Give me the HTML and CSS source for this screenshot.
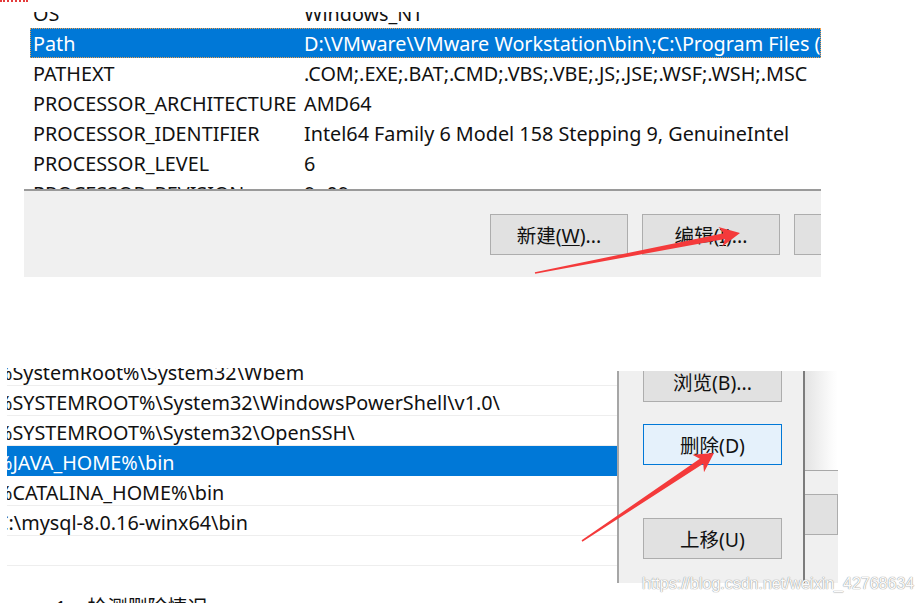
FILE: index.html
```html
<!DOCTYPE html>
<html lang="zh-CN">
<head>
<meta charset="utf-8">
<title>环境变量 Path 编辑</title>
<link rel="stylesheet" href="styles.css">
</head>
<body>
<div class="mark-dash"></div>

<section class="shot-vars">
  <div class="var-list">
    <div class="var-rows">
      <div class="var-row"><span class="var-name">OS</span><span class="var-value">Windows_NT</span></div>
      <div class="var-row is-selected"><span class="var-name">Path</span><span class="var-value">D:\VMware\VMware Workstation\bin\;C:\Program Files (x86)\Common Files\Oracle\Java\javapath</span></div>
      <div class="var-row"><span class="var-name">PATHEXT</span><span class="var-value">.COM;.EXE;.BAT;.CMD;.VBS;.VBE;.JS;.JSE;.WSF;.WSH;.MSC</span></div>
      <div class="var-row"><span class="var-name">PROCESSOR_ARCHITECTURE</span><span class="var-value">AMD64</span></div>
      <div class="var-row"><span class="var-name">PROCESSOR_IDENTIFIER</span><span class="var-value">Intel64 Family 6 Model 158 Stepping 9, GenuineIntel</span></div>
      <div class="var-row"><span class="var-name">PROCESSOR_LEVEL</span><span class="var-value">6</span></div>
      <div class="var-row"><span class="var-name">PROCESSOR_REVISION</span><span class="var-value">9e09</span></div>
    </div>
  </div>
  <div class="var-buttons">
    <button class="btn">新建(<u>W</u>)...</button>
    <button class="btn">编辑(<u>I</u>)...</button>
    <button class="btn">删除(<u>L</u>)</button>
  </div>
</section>

<section class="shot-path">
  <div class="path-list">
    <div class="path-rows">
      <div class="path-row"><span>%SystemRoot%\System32\Wbem</span></div>
      <div class="path-row"><span>%SYSTEMROOT%\System32\WindowsPowerShell\v1.0\</span></div>
      <div class="path-row"><span>%SYSTEMROOT%\System32\OpenSSH\</span></div>
      <div class="path-row is-selected"><span>%JAVA_HOME%\bin</span></div>
      <div class="path-row"><span>%CATALINA_HOME%\bin</span></div>
      <div class="path-row"><span>C:\mysql-8.0.16-winx64\bin</span></div>
      <div class="path-row"><span></span></div>
    </div>
  </div>
  <div class="path-actions">
    <button class="btn btn-first">浏览(B)...</button>
    <button class="btn btn-hover">删除(D)</button>
    <button class="btn btn-up">上移(U)</button>
  </div>
  <div class="path-behind">
    <div class="behind-shade"></div>
    <div class="behind-panel"><div class="behind-btn"></div></div>
  </div>
</section>

<p class="step">1.&nbsp;&nbsp;&nbsp;检测删除情况</p>

<div class="watermark">https://blog.csdn.net/weixin_42768634</div>

<svg class="arrows" width="922" height="603" viewBox="0 0 922 603" aria-hidden="true">
  <polygon points="534.8,272.2 723.7,233.2 718.5,227.0 740,233 722.3,246.6 724.9,239.0 535.2,273.8"/>
  <polygon points="581.6,540.3 699.8,458.8 692.4,454.8 714,453 704.0,472.2 703.2,463.8 582.4,541.7"/>
</svg>
</body>
</html>
```

FILE: styles.css
```css
* {
  box-sizing: border-box;
}

html,
body {
  margin: 0;
  background: #fff;
}

body {
  position: relative;
  width: 922px;
  height: 603px;
  overflow: hidden;
  font-family: "Noto Sans", "Noto Sans CJK SC", sans-serif;
  color: #111;
}

/* little red dotted stroke in the corner */
.mark-dash {
  width: 28px;
  height: 2px;
  border-top: 2px dotted #e43b3b;
}

/* ---------- system variables dialog ---------- */
.shot-vars {
  margin: 10px 0 0 24px;
  width: 797px;
}

.var-list {
  height: 179px;
  overflow: hidden;
  background: #fff;
  border-bottom: 2px solid #9a9a9a;
}

.var-rows {
  margin-top: -14px;
}

.var-row {
  display: flex;
  align-items: center;
  height: 30px;
  margin-left: 6px;
  padding-left: 3px;
  white-space: nowrap;
  font-size: 19.8px;
}

.var-name {
  flex: none;
  width: 271px;
}

.var-row.is-selected {
  background: #0078d7;
  color: #fff;
  outline: 1px dotted #f0a04c;
  outline-offset: -1px;
}

.var-buttons {
  display: flex;
  gap: 14px;
  height: 86px;
  padding: 23px 0 0 466px;
  overflow: hidden;
  background: #f0f0f0;
}

.btn {
  flex: none;
  width: 138px;
  height: 41px;
  padding: 0;
  border: 1px solid #adadad;
  background: #e1e1e1;
  font-family: "Noto Sans", "Noto Sans CJK SC", sans-serif;
  font-size: 19.5px;
  color: #111;
}

.btn u {
  text-underline-offset: 2px;
}

/* ---------- edit path dialog ---------- */
.shot-path {
  display: flex;
  height: 215px;
  margin-top: 91px;
}

.path-list {
  flex: none;
  width: 610px;
  margin-left: 7px;
  overflow: hidden;
  background: #fff;
}

.path-rows {
  margin-top: -12px;
}

.path-row {
  display: flex;
  align-items: center;
  height: 30px;
  padding-top: 4px;
  border-bottom: 1px solid #eeeeee;
  white-space: nowrap;
  font-size: 19.8px;
}

.path-row span {
  margin-left: -11px;
}

.path-row.is-selected {
  background: #0078d7;
  border-bottom-color: #0078d7;
  color: #fff;
}

.path-actions {
  flex: none;
  display: flex;
  flex-direction: column;
  width: 188px;
  margin-top: 3px;
  padding-left: 24px;
  overflow: hidden;
  background: #f0f0f0;
  border-left: 2px solid #a6a6a6;
  border-right: 2px solid #7c7c7c;
}

.path-actions .btn {
  width: 139px;
}

.btn-first {
  margin-top: -10px;
}

.btn-hover {
  margin-top: 22px;
  background: #e5f1fb;
  border-color: #0078d7;
}

.btn-up {
  margin-top: 53px;
}

.path-behind {
  flex: none;
  display: flex;
  flex-direction: column;
  width: 33px;
  margin-top: 3px;
}

.behind-shade {
  height: 99px;
  background: linear-gradient(to right, #e4e4e4, #fbfbfb 80%, #fff);
}

.behind-panel {
  flex: 1;
  padding-top: 23px;
  background: #f0f0f0;
  border-top: 1px solid #a8a8a8;
}

.behind-btn {
  height: 41px;
  background: #e1e1e1;
  border: 1px solid #adadad;
  border-left: none;
}

.step {
  margin: 10px 0 0 55px;
  font-family: "Noto Sans", "Noto Sans CJK SC", sans-serif;
  font-size: 20px;
  line-height: 30px;
  color: #111;
}

.watermark {
  position: absolute;
  left: 642px;
  top: 575px;
  font-family: "Liberation Sans", Arial, sans-serif;
  font-size: 16px;
  line-height: 18px;
  color: #fbfbfb;
  text-shadow: 0 0 1px #8d8d8d, 0 0 1px #a0a0a0;
  white-space: nowrap;
}

.arrows {
  position: absolute;
  left: 0;
  top: 0;
  pointer-events: none;
}

.arrows polygon {
  fill: #f43a3b;
}
```
